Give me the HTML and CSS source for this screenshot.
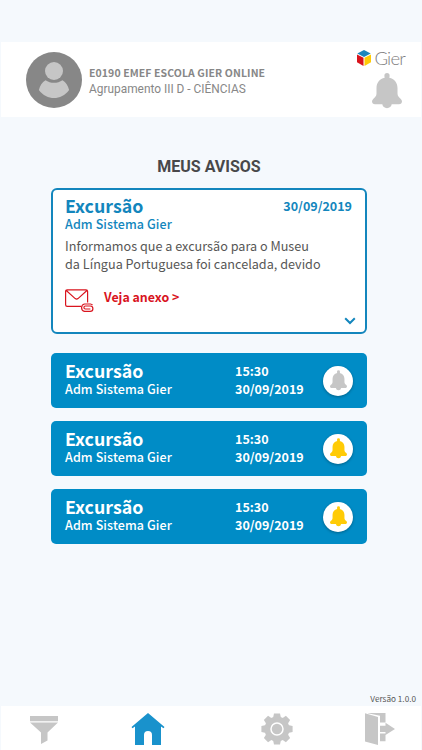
FILE: index.html
```html
<!DOCTYPE html>
<html lang="pt-BR">
<head>
    <meta charset="UTF-8">
    <meta name="viewport" content="width=device-width, initial-scale=1.0">
    <title>Gier - Meus Avisos</title>
    <link rel="stylesheet" href="styles.css">
</head>
<body>
    <svg class="hidden" xmlns="http://www.w3.org/2000/svg">
        <symbol id="bell" viewBox="0 0 30 36">
            <path d="M15 0a2.6 2.6 0 0 1 2.6 2.6c0 .9-.1 1.5-.3 2.2 5 1.100 8.200 5 8.200 10.200v5.500c0 2.500 1.500 3.800 3.300 5.500 2.300 2.400 1 5.300-1.800 5.300h-7.300a4.800 4.800 0 0 1-9.400 0H3c-2.800 0-4.100-2.900-1.800-5.300 1.800-1.700 3.300-3 3.300-5.500V15c0-5.200 3.200-9.100 8.200-10.200-.2-.7-.3-1.300-.3-2.200A2.600 2.600 0 0 1 15 0z" fill="currentColor"/>
        </symbol>
    </svg>

    <header class="header">
        <svg class="avatar" viewBox="0 0 56 56">
            <circle cx="28" cy="28" r="28" fill="#878787"/>
            <circle cx="28" cy="19" r="9" fill="#c6c6c6"/>
            <path d="M19.500 28.200c5 3.400 12 3.400 17 0 3.400 2.200 5.600 5.500 6.600 9.700-8 10.800-22.200 10.800-30.200 0 1-4.200 3.200-7.500 6.600-9.700z" fill="#c6c6c6"/>
        </svg>
        <div class="school">
            <div class="school-name">E0190 EMEF ESCOLA GIER ONLINE</div>
            <div class="school-group">Agrupamento III D - CIÊNCIAS</div>
        </div>
        <div class="brand">
            <div class="logo">
                <svg class="cube" viewBox="0 0 14 16">
                    <path d="M7 0l6.700 3.500L7 7 .3 3.500z" fill="#1a86bd"/>
                    <path d="M0 4.500l6.500 3.300V16L0 12.300z" fill="#d8131c"/>
                    <path d="M14 4.500L7.500 7.800V16l6.500-3.700z" fill="#ffcb05"/>
                </svg>
                <span>Gier</span>
            </div>
            <svg class="header-bell"><use href="#bell"/></svg>
        </div>
    </header>

    <main class="content">
        <h1>MEUS AVISOS</h1>

        <article class="notice">
            <div class="notice-top">
                <h2>Excursão</h2>
                <span class="notice-date">30/09/2019</span>
            </div>
            <div class="author">Adm Sistema Gier</div>
            <p>Informamos que a excursão para o Museu<br>da Língua Portuguesa foi cancelada, devido</p>
            <div class="attachment">
                <svg class="mail" viewBox="0 0 30 24" fill="none" stroke="#d9141e" stroke-width="1.200">
                    <path d="M16 17.400H2.200A1.600 1.600 0 0 1 .6 15.800V2.400A1.600 1.600 0 0 1 2.200.8H21a1.600 1.600 0 0 1 1.600 1.600V13.500M1 1.300l9.200 8.300q1.400 1 2.800 0L22.200 1.300"/>
                    <path d="M27.500 16.200a2.800 2.800 0 0 0-2-1.200h-6a3.800 3.800 0 0 0 0 7.400h5.700a2.700 2.700 0 0 0 0-5.400h-4.800a1.500 1.500 0 0 0 0 3h5"/>
                </svg>
                <span>Veja anexo &gt;</span>
            </div>
            <svg class="chevron" viewBox="0 0 12 8"><path d="M1.200 1.300L6 6l4.800-4.700" fill="none" stroke="#1386bd" stroke-width="2"/></svg>
        </article>

        <article class="item">
            <div class="item-title">
                <h2>Excursão</h2>
                <div class="author">Adm Sistema Gier</div>
            </div>
            <div class="item-date">15:30<br>30/09/2019</div>
            <div class="round"><svg><use href="#bell"/></svg></div>
        </article>
        <article class="item">
            <div class="item-title">
                <h2>Excursão</h2>
                <div class="author">Adm Sistema Gier</div>
            </div>
            <div class="item-date">15:30<br>30/09/2019</div>
            <div class="round active"><svg><use href="#bell"/></svg></div>
        </article>
        <article class="item">
            <div class="item-title">
                <h2>Excursão</h2>
                <div class="author">Adm Sistema Gier</div>
            </div>
            <div class="item-date">15:30<br>30/09/2019</div>
            <div class="round active"><svg><use href="#bell"/></svg></div>
        </article>
    </main>

    <div class="version">Versão 1.0.0</div>

    <nav class="nav">
        <svg class="filter" viewBox="0 0 28 28" fill="#c6c6c6">
            <path d="M0 0h28v5.200H0zM0 6.500h28L17.500 16.500v8L11 28V16.500z"/>
        </svg>
        <svg class="home" viewBox="0 0 34 32" fill="#1992cc">
            <path d="M17 0L33.500 14l-1 1.200-2.500-1.700V32H21V22a4 4 0 0 0-8 0v10H4V13.500l-2.500 1.700-1-1.200z"/>
        </svg>
        <svg class="gear" viewBox="-16 -16 32 32">
            <g fill="#c6c6c6">
                <circle r="12.500"/>
                <path id="tooth" d="M-4-11L-3-15.600h6L4-11V11L3 15.600h-6L-4 11z"/>
                <use href="#tooth" transform="rotate(45)"/>
                <use href="#tooth" transform="rotate(90)"/>
                <use href="#tooth" transform="rotate(135)"/>
            </g>
            <circle r="6" fill="#c6c6c6" stroke="#fff" stroke-width="1.500"/>
        </svg>
        <svg class="exit" viewBox="0 0 30 32" fill="#c6c6c6">
            <path d="M0 .3L13 4v28L0 28.500zM3 0h17.500v9.500H15V2.800L3 .3zM15 12.700h5.500V9.800L30 15.900l-9.500 6v-3H15zM15 20.500h5.500v7.800H15z"/>
        </svg>
    </nav>
</body>
</html>
```
FILE: styles.css
```css
* {
    box-sizing: border-box;
}

body {
    margin: 0;
    padding-top: 42px;
    height: 750px;
    display: flex;
    flex-direction: column;
    overflow: hidden;
    background-color: #f5f9fd;
    font-family: "Noto Sans CJK SC", "Noto Sans", sans-serif;
    white-space: nowrap;
}

svg {
    display: block;
    flex: none;
}

.hidden {
    display: none;
}

h1, h2, p {
    margin: 0;
}

.header {
    display: flex;
    height: 75px;
    margin: 0 1px;
    padding-left: 25px;
    background: #fff;
}

.avatar {
    width: 56px;
    height: 56px;
    margin-top: 10px;
}

.school {
    margin: 23px 0 0 7px;
    color: #878787;
}

.school-name {
    font-size: 10.5px;
    font-weight: bold;
    letter-spacing: 0.09px;
    line-height: 16px;
}

.school-group {
    font-family: Roboto, sans-serif;
    font-size: 11.9px;
    line-height: 16px;
}

.brand {
    display: flex;
    flex-direction: column;
    margin: 7px 16px 0 auto;
}

.logo {
    display: flex;
    align-items: center;
    height: 18px;
    gap: 3px;
    color: #808080;
    font-family: Lato, sans-serif;
    font-size: 18.5px;
    font-weight: 300;
    letter-spacing: -0.8px;
    line-height: 18px;
}

.cube {
    width: 14px;
    height: 16px;
}

.header-bell {
    width: 30px;
    height: 36px;
    margin: 6px 18px 0 auto;
    margin-right: 3px;
    color: #c6c6c6;
}

.content {
    flex: 1;
    width: 316px;
    margin: 41px 0 0 51px;
}

h1 {
    height: 30px;
    color: #48484a;
    font-family: Roboto, sans-serif;
    font-size: 16px;
    font-weight: bold;
    line-height: 18px;
    text-align: center;
}

h2 {
    font-size: 17.8px;
    font-weight: bold;
    line-height: 22px;
}

.author {
    font-size: 12.5px;
    font-weight: 500;
    letter-spacing: 0.1px;
    line-height: 16px;
}

.notice {
    position: relative;
    height: 146px;
    padding: 4px 13px 0 12px;
    border: 2px solid #1386bd;
    border-radius: 6px;
    background: #fff;
    color: #1386bd;
}

.notice-top {
    display: flex;
    justify-content: space-between;
    align-items: center;
}

.notice-date {
    padding-top: 2px;
    font-size: 12.5px;
    font-weight: bold;
    line-height: 18px;
}

.notice p {
    margin-top: 5px;
    color: #575756;
    font-size: 12.65px;
    line-height: 18px;
}

.attachment {
    display: flex;
    gap: 9px;
    margin-top: 16px;
    color: #d9141e;
    font-size: 12.4px;
    font-weight: bold;
    line-height: 16px;
}

.mail {
    width: 30px;
    height: 24px;
}

.chevron {
    position: absolute;
    right: 9px;
    bottom: 7px;
    width: 12px;
    height: 8px;
}

.item {
    display: flex;
    height: 55px;
    margin-top: 13px;
    padding: 6px 14px 0;
    border-radius: 5px;
    background: #008cc6;
    color: #fff;
}

.notice + .item {
    margin-top: 19px;
}

.item-title {
    width: 170px;
}

.item-date {
    margin-top: 3px;
    font-size: 12.5px;
    font-weight: bold;
    line-height: 18px;
}

.round {
    display: flex;
    justify-content: center;
    width: 30px;
    height: 30px;
    margin: 7px 0 0 auto;
    padding-top: 4px;
    border-radius: 50%;
    background: #fff;
    color: #c6c6c6;
    box-shadow: 0 1px 3px rgba(0, 0, 0, 0.3);
}

.round svg {
    width: 17px;
    height: 21px;
}

.round.active {
    color: #ffcb05;
}

.version {
    height: 16px;
    padding-right: 6px;
    color: #575756;
    font-size: 8.2px;
    line-height: 16px;
    text-align: right;
}

.nav {
    display: flex;
    height: 44px;
    margin: 0 1px;
    padding: 7px 0 0 29px;
    background: #fff;
}

.filter {
    width: 28px;
    height: 28px;
    margin-top: 3px;
}

.home {
    width: 34px;
    height: 32px;
    margin-left: 73px;
}

.gear {
    width: 32px;
    height: 32px;
    margin-left: 96px;
}

.exit {
    width: 30px;
    height: 32px;
    margin-left: 72px;
}
```
